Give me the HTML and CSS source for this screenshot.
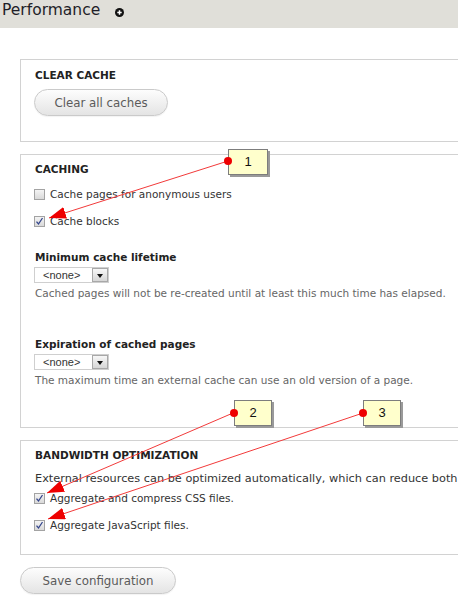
FILE: index.html
```html
<!DOCTYPE html>
<html lang="en">
<head>
<meta charset="utf-8">
<title>Performance</title>
<link rel="stylesheet" href="styles.css">
</head>
<body>
<div class="page">
  <header class="titlebar">
    <h1 class="title">Performance</h1>
    <span class="add-icon">
      <svg width="9" height="9" viewBox="0 0 9 9"><circle cx="4.5" cy="4.5" r="4.5" fill="#111"/><path d="M4.5 2.3v4.4M2.3 4.5h4.4" stroke="#fff" stroke-width="1.5"/></svg>
    </span>
  </header>

  <main class="content">
    <section class="fs fs-clear">
      <h2 class="fs-title">CLEAR CACHE</h2>
      <button class="btn btn-clear">Clear all caches</button>
    </section>

    <section class="fs fs-caching">
      <h2 class="fs-title">CACHING</h2>
      <label class="check check-first"><span class="box"></span>Cache pages for anonymous users</label>
      <label class="check"><span class="box"><svg width="9" height="9" viewBox="0 0 9 9"><path d="M1.5 4.6l2 2.4 4-6" fill="none" stroke="#34468c" stroke-width="1.3"/></svg></span>Cache blocks</label>

      <div class="item item-min">
        <div class="item-label">Minimum cache lifetime</div>
        <div class="select"><span class="select-value">&lt;none&gt;</span><span class="select-arrow"></span></div>
        <div class="desc">Cached pages will not be re-created until at least this much time has elapsed.</div>
      </div>

      <div class="item item-exp">
        <div class="item-label">Expiration of cached pages</div>
        <div class="select"><span class="select-value">&lt;none&gt;</span><span class="select-arrow"></span></div>
        <div class="desc">The maximum time an external cache can use an old version of a page.</div>
      </div>
    </section>

    <section class="fs fs-bandwidth">
      <h2 class="fs-title">BANDWIDTH OPTIMIZATION</h2>
      <p class="intro">External resources can be optimized automatically, which can reduce both</p>
      <label class="check check-css"><span class="box"><svg width="9" height="9" viewBox="0 0 9 9"><path d="M1.5 4.6l2 2.4 4-6" fill="none" stroke="#34468c" stroke-width="1.3"/></svg></span>Aggregate and compress CSS files.</label>
      <label class="check"><span class="box"><svg width="9" height="9" viewBox="0 0 9 9"><path d="M1.5 4.6l2 2.4 4-6" fill="none" stroke="#34468c" stroke-width="1.3"/></svg></span>Aggregate JavaScript files.</label>
    </section>

    <button class="btn btn-save">Save configuration</button>
  </main>

  <svg class="arrows" width="458" height="600" viewBox="0 0 458 600">
    <defs>
      <marker id="head" markerUnits="userSpaceOnUse" markerWidth="18" markerHeight="12" refX="17" refY="6" orient="auto">
        <path d="M0 0L17 6L0 12z" fill="#ee0000"/>
      </marker>
    </defs>
    <line x1="228" y1="161" x2="49" y2="218" stroke="#f23a3a" stroke-width="1" marker-end="url(#head)"/>
    <line x1="233" y1="413" x2="47" y2="493" stroke="#f23a3a" stroke-width="1" marker-end="url(#head)"/>
    <line x1="363" y1="413" x2="48" y2="519" stroke="#f23a3a" stroke-width="1" marker-end="url(#head)"/>
  </svg>

  <div class="callout callout-1">1</div>
  <div class="callout callout-2">2</div>
  <div class="callout callout-3">3</div>
  <svg class="dots" width="458" height="600" viewBox="0 0 458 600">
    <circle cx="228" cy="161" r="4" fill="#ee0000"/>
    <circle cx="234" cy="413" r="4" fill="#ee0000"/>
    <circle cx="363" cy="413" r="4" fill="#ee0000"/>
  </svg>
</div>
</body>
</html>
```

FILE: styles.css
```css
html, body {
  margin: 0;
  padding: 0;
  background: #fff;
  overflow: hidden;
}

.page {
  position: relative;
  width: 458px;
  height: 600px;
  overflow: hidden;
  font-family: "DejaVu Sans", Verdana, sans-serif;
  font-size: 10.5px;
  line-height: 14px;
  color: #333;
}

.titlebar {
  display: flex;
  align-items: flex-start;
  height: 28px;
  box-sizing: border-box;
  padding-left: 2px;
  background: #e0dfd9;
}

.title {
  margin: 0;
  font-size: 15.5px;
  line-height: 20px;
  font-weight: normal;
  color: #1e1e28;
}

.add-icon {
  display: block;
  width: 9px;
  height: 9px;
  margin: 8px 0 0 15px;
}
.add-icon svg { display: block; }

.content {
  padding: 31px 0 0 20px;
}

.fs {
  width: 470px;
  box-sizing: border-box;
  border: 1px solid #d2d2d2;
  padding: 7px 0 0 14px;
}

.fs-clear {
  padding-top: 8px;
  padding-bottom: 25px;
}

.fs-caching {
  margin-top: 12px;
  padding-bottom: 40px;
}

.fs-bandwidth {
  margin-top: 12px;
  padding-bottom: 22px;
}

.fs-title {
  margin: 0;
  font-size: 10.5px;
  line-height: 14px;
  font-weight: bold;
  color: #222;
}

.btn {
  display: block;
  box-sizing: border-box;
  height: 27px;
  padding: 0;
  border: 1px solid #cacaca;
  border-radius: 14px;
  background: linear-gradient(#fdfdfd, #e4e4e4);
  font-family: "DejaVu Sans", Verdana, sans-serif;
  font-size: 11.8px;
  color: #5b5b5b;
  text-align: center;
  box-shadow: 0 1px 1px rgba(0,0,0,0.05);
}

.btn-clear {
  width: 134px;
  margin: 7px 0 0 -1px;
}

.btn-save {
  width: 156px;
  margin-top: 12px;
}

.check {
  display: flex;
  align-items: center;
  margin-top: 13px;
  margin-left: -1px;
  white-space: nowrap;
}

.check-first { margin-top: 11px; }
.check-css { margin-top: 5px; }

.box {
  display: flex;
  align-items: center;
  justify-content: center;
  width: 11px;
  height: 11px;
  box-sizing: border-box;
  margin-right: 5px;
  border: 1px solid #a3a3a3;
  background: linear-gradient(#f4f4f4, #d9d9d9);
}
.box svg { display: block; }

.item-min { margin-top: 22px; }
.item-exp { margin-top: 37px; }

.item-label {
  font-weight: bold;
  color: #222;
}

.select {
  display: flex;
  align-items: center;
  width: 75px;
  height: 16px;
  box-sizing: border-box;
  margin: 3px 0 0 -1px;
  border: 1px solid #cfcfcf;
  background: #fff;
}

.select-value {
  flex: 1;
  padding-left: 8px;
  font-family: "Liberation Sans", Arial, sans-serif;
  font-size: 11px;
  line-height: 14px;
  color: #333;
}

.select-arrow {
  position: relative;
  width: 16px;
  height: 14px;
  box-sizing: border-box;
  border: 1px solid #a8a8a8;
  background: linear-gradient(#f7f7f7, #d6d6d6);
}
.select-arrow::after {
  content: "";
  position: absolute;
  left: 4px;
  top: 5px;
  border-left: 3px solid transparent;
  border-right: 3px solid transparent;
  border-top: 4px solid #111;
}

.desc {
  margin-top: 3px;
  color: #666;
  white-space: nowrap;
}

.intro {
  margin: 10px 0 0;
  font-size: 11.3px;
  white-space: nowrap;
  color: #333;
}

.arrows, .dots {
  position: absolute;
  left: 0;
  top: 0;
  pointer-events: none;
}

.callout {
  position: absolute;
  width: 38px;
  height: 26px;
  box-sizing: border-box;
  border: 1px solid #7d7d7d;
  background: #ffffcc;
  box-shadow: 2px 2px 0 #9a9a9a;
  font-family: "Liberation Sans", Arial, sans-serif;
  font-size: 13px;
  line-height: 24px;
  text-align: center;
  color: #111;
}

.callout-1 { left: 228px; top: 149px; width: 40px; }
.callout-2 { left: 234px; top: 400px; }
.callout-3 { left: 363px; top: 400px; }
```
